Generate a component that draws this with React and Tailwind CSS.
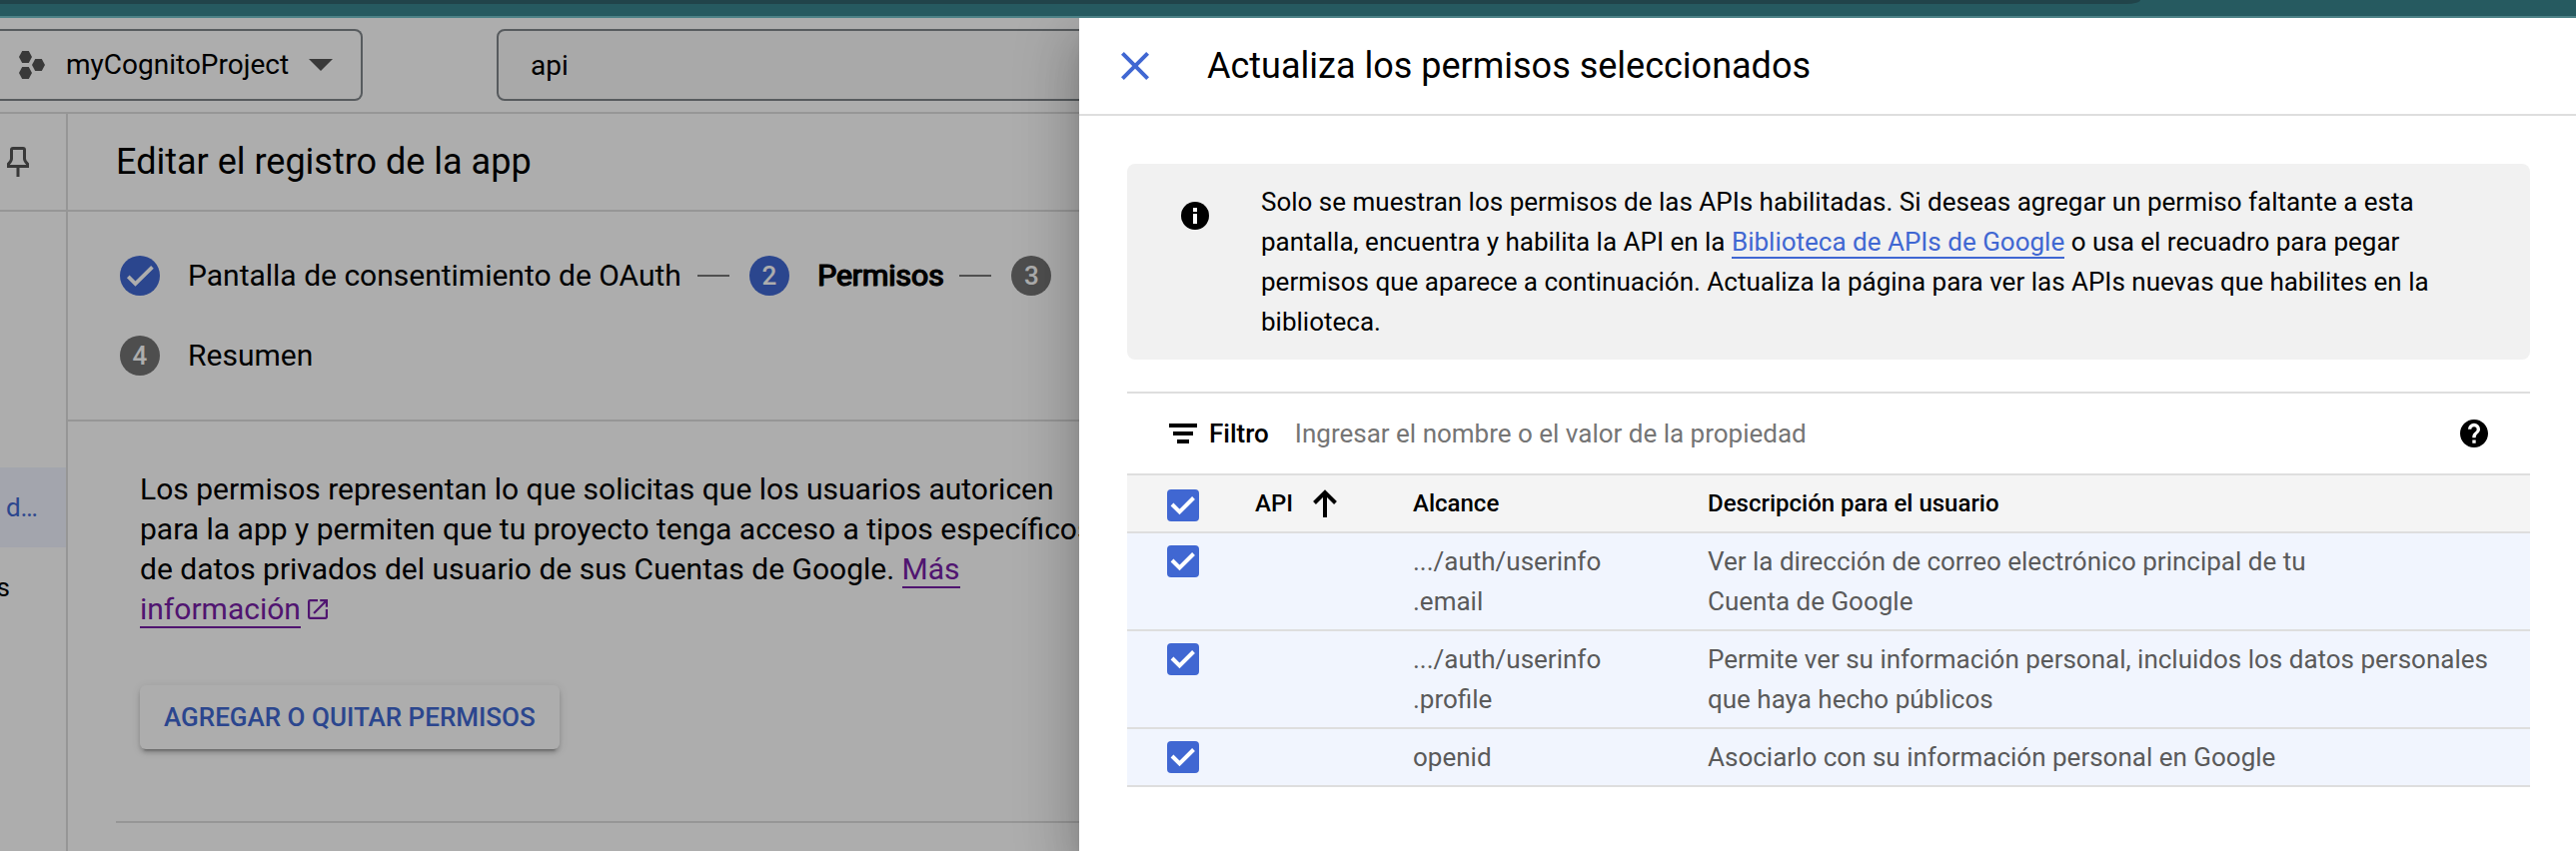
import React from "react";

const scopes = [
  {
    id: "email",
    scope: (
      <>
        .../auth/userinfo
        <wbr />
        .email
      </>
    ),
    description: "Ver la dirección de correo electrónico principal de tu Cuenta\u00a0de\u00a0Google",
  },
  {
    id: "profile",
    scope: (
      <>
        .../auth/userinfo
        <wbr />
        .profile
      </>
    ),
    description:
      "Permite ver su información personal, incluidos los datos personales que haya hecho públicos",
  },
  { id: "openid", scope: "openid", description: "Asociarlo con su información personal en Google" },
];

function HexIcon() {
  return (
    <svg viewBox="0 0 28 28" className="size-7 shrink-0 fill-[#555]" aria-hidden="true">
      <path d="M4.2 0h6.6L14 6l-3.2 6H4.2L1 6z" />
      <path d="M17.2 8h6.6L27 14l-3.2 6h-6.6L14 14z" />
      <path d="M4.2 16h6.6L14 22l-3.2 6H4.2L1 22z" />
    </svg>
  );
}

function PinIcon() {
  return (
    <svg
      viewBox="0 0 22 30"
      className="h-[30px] w-[22px] fill-none stroke-[#555]"
      strokeWidth="3"
      aria-hidden="true"
    >
      <path d="M4.5 3q0-1.5 1.5-1.5h10q1.5 0 1.5 1.5v9q0 2 3 5v2.5h-19V17q3-3 3-5z" />
      <path d="M11 20v10" />
    </svg>
  );
}

function Checkbox({ label }) {
  return (
    <label className="relative block size-8">
      <input
        type="checkbox"
        defaultChecked
        aria-label={label}
        className="peer block size-8 appearance-none rounded border-2 border-[#757575] checked:border-0 checked:bg-[#4067d2]"
      />
      <svg
        viewBox="0 0 32 32"
        className="pointer-events-none invisible absolute inset-0 size-8 fill-none stroke-white peer-checked:visible"
        strokeWidth="4"
        aria-hidden="true"
      >
        <path d="M5 15l7.5 7.5L26.500 8.500" />
      </svg>
    </label>
  );
}

function StepBadge({ done, active, children }) {
  return (
    <span
      className={
        "flex size-10 shrink-0 items-center justify-center rounded-full text-[26px] leading-10 font-medium text-white " +
        (done || active ? "bg-[#4067d2]" : "bg-[#737373]")
      }
    >
      {done ? (
        <svg viewBox="0 0 24 24" className="size-9 fill-none stroke-white" strokeWidth="2.5" aria-hidden="true">
          <path d="M4.200 12.600L9 17.400L20.300 6.300" />
        </svg>
      ) : (
        children
      )}
    </span>
  );
}

function Connector() {
  return <span className="mr-5 ml-4 h-0.5 w-8 shrink-0 bg-[#757575]" />;
}

function Header() {
  return (
    <header className="flex items-center gap-[134px] border-b-2 border-[#dedede] py-[11px]">
      <button
        type="button"
        className="flex h-[72px] w-[363px] shrink-0 items-center rounded-r-lg border-2 border-l-0 border-[#80868b] pr-7 pl-[18px] text-[28px] leading-10"
      >
        <HexIcon />
        <span className="ml-5 flex-1 text-left">myCognitoProject</span>
        <svg viewBox="0 0 24 12" className="h-3 w-6 fill-[#555]" aria-hidden="true">
          <path d="M0 0h24L12 12z" />
        </svg>
      </button>
      <input
        type="search"
        aria-label="Buscar"
        defaultValue="api"
        className="mr-[134px] h-[72px] min-w-0 flex-1 appearance-none rounded-lg border-2 border-[#80868b] bg-[#fafafa] px-8 text-[28px] leading-10"
      />
    </header>
  );
}

function Sidebar() {
  return (
    <aside className="flex w-[68px] shrink-0 flex-col border-r-2 border-[#dedede]">
      <div className="flex h-[98px] items-center border-b-2 border-[#dedede] pl-[7px]">
        <button type="button" aria-label="Fijar menú">
          <PinIcon />
        </button>
      </div>
      <nav className="mt-64 flex flex-col overflow-hidden text-[26px] leading-10">
        <a href="#consent" className="flex h-20 items-center justify-end bg-[#f0f4ff] pr-7 text-[#4067d2]">
          d…
        </a>
        <a href="#usage" className="flex h-20 items-center justify-end pr-14">
          s
        </a>
      </nav>
    </aside>
  );
}

function Main() {
  return (
    <main className="min-w-0 flex-1">
      <h1 className="border-b-2 border-[#dedede] px-12 py-6 text-[36px] leading-[48px]">
        Editar el registro de la app
      </h1>

      <div className="border-b-2 border-[#dedede] py-11 pl-[52px]">
        <ol className="flex max-w-[960px] flex-wrap gap-y-10 text-[30px] leading-10">
          <li className="flex items-center">
            <StepBadge done />
            <span className="ml-7">Pantalla de consentimiento de OAuth</span>
            <Connector />
          </li>
          <li className="flex items-center" aria-current="step">
            <StepBadge active>2</StepBadge>
            <span className="ml-7 [-webkit-text-stroke:1px_black] [text-shadow:1px_0_black]">Permisos</span>
            <Connector />
          </li>
          <li className="flex items-center">
            <StepBadge>3</StepBadge>
          </li>
          <li className="flex items-center">
            <StepBadge>4</StepBadge>
            <span className="ml-7">Resumen</span>
          </li>
        </ol>
      </div>

      <section className="ml-12 border-b-2 border-[#dedede] px-6 pt-12 pb-[72px]">
        <p className="max-w-[968px] text-[30px] leading-10">
          Los permisos representan lo que solicitas que los usuarios autoricen para la app y permiten que tu
          proyecto tenga acceso a tipos específicos de datos privados del usuario de sus Cuentas de Google.{" "}
          <a href="#more" className="text-[#7620a6]">
            <span className="border-b-2 border-[#7620a6]">Más información</span>
            <svg viewBox="3 3 18 18" className="ml-[7px] inline size-5 fill-current align-baseline" aria-hidden="true">
              <path d="M19 19H5V5h7V3H5a2 2 0 0 0-2 2v14a2 2 0 0 0 2 2h14c1.100 0 2-.9 2-2v-7h-2v7zM14 3v2h3.590l-9.830 9.830 1.410 1.410L19 6.410V10h2V3h-7z" />
            </svg>
          </a>
        </p>
        <button
          type="button"
          className="mt-14 h-16 rounded-md bg-white px-6 text-[26px] leading-10 font-medium text-[#4067d2] shadow-[0_6px_2px_-4px_rgba(0,0,0,0.2),0_4px_4px_0_rgba(0,0,0,0.14),0_2px_10px_0_rgba(0,0,0,0.12)]"
        >
          AGREGAR O QUITAR PERMISOS
        </button>
      </section>
    </main>
  );
}

function ScopeTable() {
  return (
    <div className="mt-8 border-t-2 border-[#dedede] text-[26px] leading-10">
      <div className="flex h-20 items-center px-[42px]">
        <label htmlFor="filter" className="flex items-center font-medium">
          <svg viewBox="0 0 28 20" className="mr-3 h-5 w-7" aria-hidden="true">
            <path d="M0 0h28v4H0zM4 8h20v4H4zM8 16h12v4H8z" />
          </svg>
          Filtro
        </label>
        <input
          id="filter"
          type="text"
          placeholder="Ingresar el nombre o el valor de la propiedad"
          className="ml-[26px] min-w-0 flex-1 placeholder:text-[#757575]"
        />
        <button type="button" aria-label="Ayuda">
          <svg viewBox="2 2 20 20" className="size-7" aria-hidden="true">
            <path d="M12 2C6.480 2 2 6.480 2 12s4.480 10 10 10 10-4.480 10-10S17.520 2 12 2zm1.200 17h-2.400v-2.400h2.400V19zm2.200-7.700-.9.900c-.8.800-1.300 1.400-1.300 2.900h-2.400v-.6c0-1.100.5-2.100 1.200-2.800l1.300-1.300c.4-.3.600-.8.600-1.400a1.900 1.900 0 0 0-3.800 0H7.700a4.300 4.300 0 0 1 8.600 0c0 .9-.4 1.700-.9 2.300z" />
          </svg>
        </button>
      </div>
      <table className="w-full table-fixed border-collapse text-left">
        <colgroup>
          <col className="w-32" />
          <col className="w-[158px]" />
          <col className="w-[295px]" />
          <col />
        </colgroup>
        <thead>
          <tr className="h-[58px] border-y-2 border-[#dedede] bg-[#f4f4f4] align-top text-[24px]">
            <th className="pt-3.5 pl-10">
              <Checkbox label="Seleccionar todo" />
            </th>
            <th className="py-2 font-medium" aria-sort="ascending">
              <button type="button" className="flex items-center">
                API
                <svg
                  viewBox="0 0 24 28"
                  className="ml-5 h-7 w-6 fill-none stroke-black"
                  strokeWidth="4"
                  aria-hidden="true"
                >
                  <path d="M12 28V3M1.500 13.500L12 3l10.500 10.500" />
                </svg>
              </button>
            </th>
            <th className="py-2 font-medium">Alcance</th>
            <th className="py-2 pr-10 font-medium">Descripción para el usuario</th>
          </tr>
        </thead>
        <tbody>
          {scopes.map((row) => (
            <tr key={row.id} className="border-b-2 border-[#dedede] bg-[#f1f5fe] align-top text-[#5a5a5a]">
              <td className="pt-3 pl-10">
                <Checkbox label={row.id} />
              </td>
              <td />
              <td className="py-2 pr-14">{row.scope}</td>
              <td className="py-2 pr-10">{row.description}</td>
            </tr>
          ))}
        </tbody>
      </table>
    </div>
  );
}

function Drawer() {
  return (
    <div
      role="dialog"
      aria-labelledby="drawer-title"
      className="ml-[1080px] h-full bg-white shadow-[0_16px_20px_-10px_rgba(0,0,0,0.2),0_32px_48px_4px_rgba(0,0,0,0.14),0_12px_60px_10px_rgba(0,0,0,0.12)]"
    >
      <div className="flex items-center gap-12 border-b-2 border-[#dedede] py-6 pl-8">
        <button type="button" aria-label="Cerrar">
          <svg viewBox="0 0 24 24" className="size-12 fill-[#4067d2]" aria-hidden="true">
            <path d="M19 6.410 17.590 5 12 10.590 6.410 5 5 6.410 10.590 12 5 17.590 6.410 19 12 13.410 17.590 19 19 17.590 13.410 12z" />
          </svg>
        </button>
        <h2 id="drawer-title" className="text-[36px] leading-[48px]">
          Actualiza los permisos seleccionados
        </h2>
      </div>
      <div className="pt-12 pr-[46px] pl-12">
        <div className="flex items-start rounded-lg bg-[#f1f1f1] py-[18px] pr-[72px] pl-[54px] text-[26px] leading-10">
          <svg viewBox="0 0 28 28" className="mt-5 size-7 shrink-0" aria-hidden="true">
            <circle cx="14" cy="14" r="14" />
            <path fill="#fff" d="M12 6h4v4h-4zM12 12h4v10h-4z" />
          </svg>
          <p className="ml-[52px]">
            Solo se muestran los permisos de las APIs habilitadas. Si deseas agregar un permiso faltante a esta
            pantalla, encuentra y habilita la API en la{" "}
            <a href="#library" className="border-b-2 border-[#4067d2] text-[#4067d2]">
              Biblioteca de APIs de Google
            </a>{" "}
            o usa el recuadro para pegar permisos que aparece a continuación. Actualiza la página para ver las APIs
            nuevas que habilites en la biblioteca.
          </p>
        </div>
        <ScopeTable />
      </div>
    </div>
  );
}

export default function App() {
  return (
    <div className="flex min-h-screen flex-col overflow-hidden bg-white font-[Roboto,sans-serif] text-black">
      <div className="h-[18px] border-b-2 border-[#4d8287] bg-[#265a60] pr-[436px]">
        <div className="h-1 bg-[#21444a] [border-bottom-right-radius:14px_4px]" />
      </div>
      <div className="relative flex flex-1 flex-col overflow-hidden">
        <Header />
        <div className="flex flex-1">
          <Sidebar />
          <Main />
        </div>
        <div className="absolute inset-0 bg-black/32">
          <Drawer />
        </div>
      </div>
    </div>
  );
}
